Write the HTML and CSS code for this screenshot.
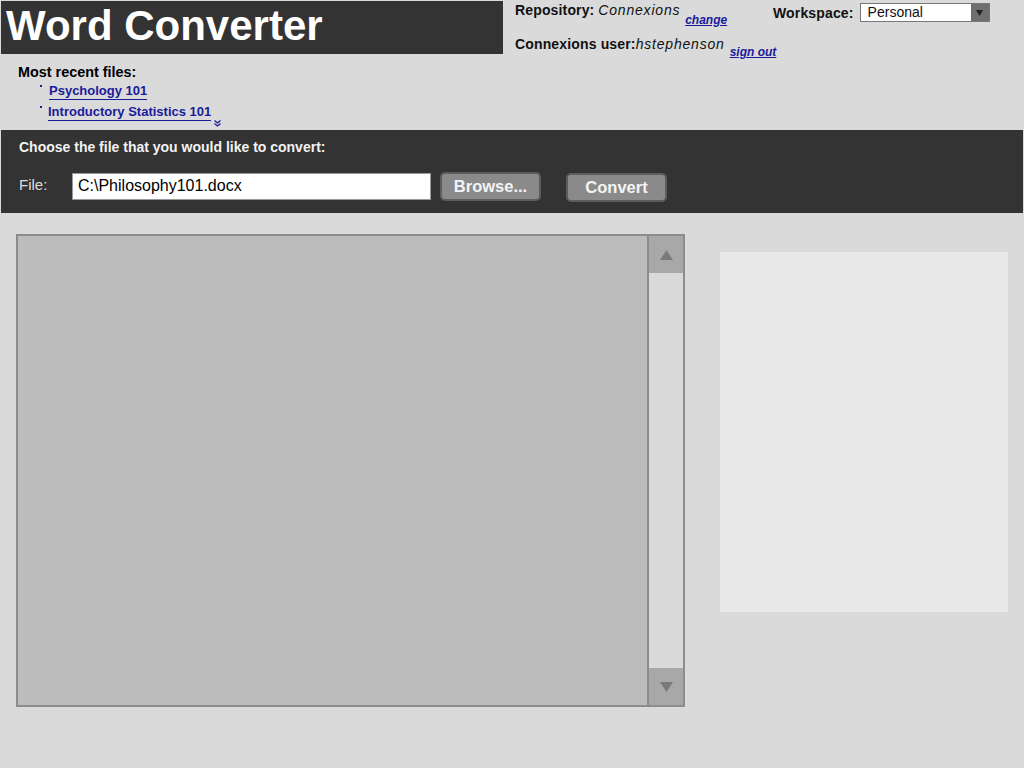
FILE: index.html
```html
<!DOCTYPE html>
<html>
<head>
<meta charset="utf-8">
<title>Word Converter</title>
<link rel="stylesheet" href="styles.css">
</head>
<body>
<div class="page">
  <header class="top">
    <div class="titlebox"><h1>Word Converter</h1></div>
    <div class="account">
      <div class="acct-row">
        <div class="repo">
          <span class="lbl">Repository:</span> <span class="val">Connexions</span>
          <a class="small-link" href="#">change</a>
        </div>
        <div class="workspace">
          <span class="lbl">Workspace:</span>
          <div class="select"><span class="sel-text">Personal</span><span class="sel-btn"><svg width="7" height="6" viewBox="0 0 7 6"><path d="M0 0H7L3.5 6Z" fill="#222"/></svg></span></div>
        </div>
      </div>
      <div class="acct-row row2">
        <span class="lbl">Connexions user:</span><span class="val">hstephenson</span>
        <a class="small-link" href="#">sign out</a>
      </div>
    </div>
  </header>

  <section class="recent">
    <div class="recent-title">Most recent files:</div>
    <ul class="recent-list">
      <li><a href="#">Psychology 101</a></li>
      <li><a href="#">Introductory Statistics 101</a><span class="more"><svg width="7" height="7" viewBox="0 0 7 7"><path d="M0.5 0.5L3.5 3L6.5 0.5M0.5 3.5L3.5 6L6.5 3.5" fill="none" stroke="#1a1a9a" stroke-width="1.3"/></svg></span></li>
    </ul>
  </section>

  <section class="choose">
    <div class="choose-title">Choose the file that you would like to convert:</div>
    <div class="file-row">
      <span class="file-lbl">File:</span>
      <div class="file-input">C:\Philosophy101.docx</div>
      <button class="btn browse">Browse...</button>
      <button class="btn convert">Convert</button>
    </div>
  </section>

  <section class="main">
    <div class="viewer">
      <div class="viewer-content"></div>
      <div class="scrollbar">
        <div class="sb-btn"><svg width="13" height="10" viewBox="0 0 13 10"><path d="M6.5 0L13 10H0Z" fill="#7a7a7a"/></svg></div>
        <div class="sb-track"></div>
        <div class="sb-btn"><svg width="13" height="10" viewBox="0 0 13 10"><path d="M0 0H13L6.5 10Z" fill="#7a7a7a"/></svg></div>
      </div>
    </div>
    <div class="preview"></div>
  </section>
</div>
</body>
</html>
```

FILE: styles.css
```css
html, body {
  margin: 0;
  padding: 0;
  background: #dadada;
  font-family: "Liberation Sans", Arial, sans-serif;
}

.page {
  width: 1024px;
  height: 768px;
  padding-top: 1px;
  box-sizing: border-box;
}

.top {
  display: flex;
  align-items: flex-start;
}

.titlebox {
  width: 502px;
  height: 53px;
  margin-left: 1px;
  background: #333333;
  display: flex;
  align-items: center;
}

.titlebox h1 {
  margin: 0 0 0 5px;
  font-size: 42px;
  font-weight: bold;
  color: #ffffff;
  line-height: 1;
  position: relative;
  top: -2px;
}

.account {
  padding-left: 12px;
  font-size: 14px;
  color: #111;
}

.acct-row {
  display: flex;
  align-items: flex-start;
}

.repo {
  width: 258px;
  padding-top: 1px;
  white-space: nowrap;
}

.lbl {
  font-weight: bold;
  letter-spacing: 0.15px;
}

.val {
  font-style: italic;
  letter-spacing: 0.8px;
}

.small-link {
  display: inline-block;
  font-size: 12px;
  font-weight: bold;
  font-style: italic;
  color: #1a1a9a;
  text-decoration: underline;
  position: relative;
  top: 9px;
  margin-left: 1px;
}

.workspace {
  display: flex;
  align-items: center;
  gap: 5px;
  padding-top: 2px;
}

.select {
  width: 128px;
  height: 17px;
  margin-left: 1px;
  background: #fff;
  border: 1px solid #777;
  display: flex;
  align-items: stretch;
}

.sel-text {
  flex: 1;
  padding-left: 7px;
  font-size: 14px;
  line-height: 17px;
}

.sel-btn {
  width: 18px;
  background: #6f6f6f;
  display: flex;
  align-items: center;
  justify-content: center;
}

.row2 {
  margin-top: 14px;
  white-space: nowrap;
}

.row2 .small-link {
  margin-left: 5px;
}

.recent {
  padding: 10px 0 0 18px;
  height: 66px;
}

.recent-title {
  font-size: 14.4px;
  font-weight: bold;
  color: #000;
  line-height: 17px;
}

.recent-list {
  list-style: none;
  margin: 0;
  padding: 0 0 0 22px;
}

.recent-list li {
  position: relative;
  padding-left: 9px;
  font-size: 13px;
  line-height: 15px;
  margin-top: 2px;
}

.recent-list li + li {
  margin-top: 6px;
  padding-left: 8px;
}

.recent-list li::before {
  content: "";
  position: absolute;
  left: 0;
  top: 2px;
  width: 2px;
  height: 2px;
  background: #1a1a9a;
}

.recent-list a {
  color: #1a1a9a;
  font-weight: bold;
  text-decoration: none;
  border-bottom: 1px solid #1a1a9a;
  padding-bottom: 1px;
}

.more {
  display: inline-block;
  position: relative;
  top: 11px;
  margin-left: 3px;
}

.choose {
  margin: 0 1px;
  height: 83px;
  box-sizing: border-box;
  background: #333333;
  padding: 9px 0 0 18px;
}

.choose-title {
  font-size: 14px;
  font-weight: bold;
  color: #f2f2f2;
  line-height: 16px;
}

.file-row {
  display: flex;
  align-items: center;
  margin-top: 17px;
}

.file-lbl {
  font-size: 15px;
  color: #dddddd;
  width: 53px;
  position: relative;
  top: -2px;
}

.file-input {
  width: 359px;
  height: 27px;
  box-sizing: border-box;
  background: #fff;
  border: 1px solid #999;
  font-size: 16px;
  line-height: 23px;
  padding-left: 5px;
  color: #000;
}

.btn {
  font-family: "Liberation Sans", Arial, sans-serif;
  font-size: 16.5px;
  font-weight: bold;
  color: #f4f4f4;
  background: #8a8a8a;
  border: 2px solid #5c5c5c;
  border-radius: 5px;
  width: 101px;
  height: 29px;
  padding: 0;
}

.browse {
  margin-left: 9px;
}

.convert {
  margin-left: 25px;
  position: relative;
  top: 1px;
}

.main {
  display: flex;
  align-items: flex-start;
  margin-top: 21px;
  padding-left: 16px;
}

.viewer {
  width: 669px;
  height: 473px;
  box-sizing: border-box;
  border: 2px solid #8c8c8c;
  background: #bcbcbc;
  display: flex;
}

.viewer-content {
  flex: 1;
}

.scrollbar {
  width: 34px;
  border-left: 2px solid #8c8c8c;
  display: flex;
  flex-direction: column;
  background: #d9d9d9;
}

.sb-btn {
  height: 37px;
  background: #a8a8a8;
  display: flex;
  align-items: center;
  justify-content: center;
}

.sb-track {
  flex: 1;
  background: #d9d9d9;
}

.preview {
  width: 288px;
  height: 360px;
  margin-left: 35px;
  margin-top: 18px;
  background: #e8e8e8;
}
```
